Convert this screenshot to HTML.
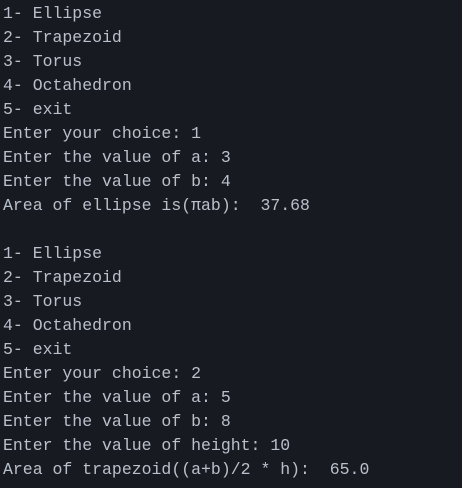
<!DOCTYPE html><html><head><style>
html,body{margin:0;padding:0;background:#181a21;width:462px;height:488px;overflow:hidden}
pre{margin:0;padding:2px 0 0 3px;font-family:"Liberation Mono",monospace;font-size:16.5px;line-height:24px;color:#b9c0cc}
</style></head><body><pre>1- Ellipse
2- Trapezoid
3- Torus
4- Octahedron
5- exit
Enter your choice: 1
Enter the value of a: 3
Enter the value of b: 4
Area of ellipse is(πab):  37.68

1- Ellipse
2- Trapezoid
3- Torus
4- Octahedron
5- exit
Enter your choice: 2
Enter the value of a: 5
Enter the value of b: 8
Enter the value of height: 10
Area of trapezoid((a+b)/2 * h):  65.0</pre></body></html>
